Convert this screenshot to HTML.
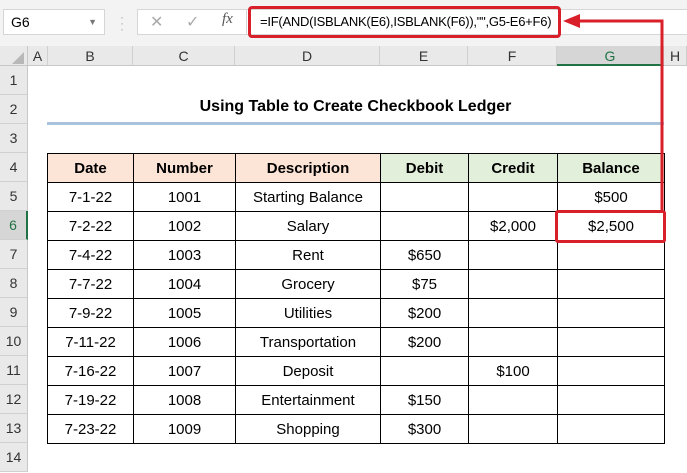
<!DOCTYPE html>
<html><head><meta charset="utf-8"><style>
*{margin:0;padding:0;box-sizing:border-box}
body{width:687px;height:473px;background:#fff;position:relative;overflow:hidden;font-family:"Liberation Sans",sans-serif;color:#000}
.a{position:absolute}
.top{left:0;top:0;width:687px;height:46px;background:#f3f3f3}
.ch{top:46px;height:20px;background:#e9e9e9;border-bottom:1px solid #c8c8c8;border-right:1px solid #d0d0d0;text-align:center;font-size:14px;line-height:20px;color:#333}
.rh{left:0;width:28px;height:29px;background:#e9e9e9;border-bottom:1px solid #d0d0d0;border-right:1px solid #c8c8c8;text-align:center;font-size:14px;line-height:29px;color:#333}
table{position:absolute;left:47px;top:153px;border-collapse:collapse}
td{border:1px solid #000;height:29px;text-align:center;font-size:15px;padding:0}
.h td{font-weight:bold}
</style></head><body>
<div class="a top"></div>
<div class="a" style="left:3px;top:9px;width:102px;height:26px;background:#fff;border:1px solid #d6d6d6;font-size:14px;line-height:24px;padding-left:7px">G6<span style="position:absolute;right:7px;top:0;font-size:9px;color:#777">▼</span></div>
<div class="a" style="left:120px;top:14px;color:#aaa;font-size:12px;line-height:6px">·<br>·<br>·</div>
<div class="a" style="left:137px;top:9px;width:110px;height:26px;background:#fff;border:1px solid #d6d6d6"></div>
<div class="a" style="left:150px;top:12px;color:#aaa;font-size:16px">✕</div>
<div class="a" style="left:186px;top:12px;color:#aaa;font-size:16px">✓</div>
<div class="a" style="left:222px;top:11px;color:#555;font-size:15px;font-style:italic;font-family:'Liberation Serif',serif">fx</div>
<div class="a" style="left:247px;top:9px;width:440px;height:26px;background:#fff;border-top:1px solid #d6d6d6;border-bottom:1px solid #d6d6d6"></div>
<div class="a" style="left:248px;top:6px;width:313px;height:32px;border:3px solid #d9202a;border-radius:4px;font-size:13px;letter-spacing:-0.25px;line-height:26px;padding-left:9px;white-space:nowrap">=IF(AND(ISBLANK(E6),ISBLANK(F6)),"",G5-E6+F6)</div>
<div class="a" style="left:0;top:46px;width:28px;height:20px;background:#e9e9e9;border-right:1px solid #c8c8c8;border-bottom:1px solid #c8c8c8"></div>
<div class="a" style="left:12px;top:52px;width:0;height:0;border-left:12px solid transparent;border-bottom:12px solid #b8b8b8"></div>
<div class="a ch" style="left:28px;width:20px">A</div>
<div class="a ch" style="left:48px;width:85px">B</div>
<div class="a ch" style="left:133px;width:102px">C</div>
<div class="a ch" style="left:235px;width:145px">D</div>
<div class="a ch" style="left:380px;width:88px">E</div>
<div class="a ch" style="left:468px;width:89px">F</div>
<div class="a ch" style="left:557px;width:107px;background:#d6d6d6;border-bottom:2px solid #217346;color:#217346">G</div>
<div class="a ch" style="left:664px;width:23px">H</div>
<div class="a rh" style="top:66px">1</div><div class="a rh" style="top:95px">2</div><div class="a rh" style="top:124px">3</div><div class="a rh" style="top:153px">4</div><div class="a rh" style="top:182px">5</div><div class="a rh" style="top:211px;background:#d6d6d6;border-right:2px solid #217346;color:#217346">6</div><div class="a rh" style="top:240px">7</div><div class="a rh" style="top:269px">8</div><div class="a rh" style="top:298px">9</div><div class="a rh" style="top:327px">10</div><div class="a rh" style="top:356px">11</div><div class="a rh" style="top:385px">12</div><div class="a rh" style="top:414px">13</div><div class="a rh" style="top:443px">14</div>
<div class="a" style="left:47px;top:98px;width:617px;text-align:center;font-weight:bold;font-size:16px">Using Table to Create Checkbook Ledger</div>
<div class="a" style="left:47px;top:122px;width:617px;height:3px;background:#aac3dd"></div>
<table>
<colgroup><col style="width:86px"><col style="width:102px"><col style="width:145px"><col style="width:88px"><col style="width:89px"><col style="width:107px"></colgroup>
<tr class="h"><td style="background:#fce4d6">Date</td><td style="background:#fce4d6">Number</td><td style="background:#fce4d6">Description</td><td style="background:#e2efda">Debit</td><td style="background:#e2efda">Credit</td><td style="background:#e2efda">Balance</td></tr>
<tr><td>7-1-22</td><td>1001</td><td>Starting Balance</td><td></td><td></td><td>$500</td></tr>
<tr><td>7-2-22</td><td>1002</td><td>Salary</td><td></td><td>$2,000</td><td>$2,500</td></tr>
<tr><td>7-4-22</td><td>1003</td><td>Rent</td><td>$650</td><td></td><td></td></tr>
<tr><td>7-7-22</td><td>1004</td><td>Grocery</td><td>$75</td><td></td><td></td></tr>
<tr><td>7-9-22</td><td>1005</td><td>Utilities</td><td>$200</td><td></td><td></td></tr>
<tr><td>7-11-22</td><td>1006</td><td>Transportation</td><td>$200</td><td></td><td></td></tr>
<tr><td>7-16-22</td><td>1007</td><td>Deposit</td><td></td><td>$100</td><td></td></tr>
<tr><td>7-19-22</td><td>1008</td><td>Entertainment</td><td>$150</td><td></td><td></td></tr>
<tr><td>7-23-22</td><td>1009</td><td>Shopping</td><td>$300</td><td></td><td></td></tr>
</table>
<div class="a" style="left:555px;top:210px;width:111px;height:33px;border:3px solid #d9202a;border-radius:3px"></div>
<svg class="a" style="left:0;top:0" width="687" height="473"><path d="M662 210 V21 H576" fill="none" stroke="#d9202a" stroke-width="3"/><path d="M563 21 L580 14 L580 28 Z" fill="#d9202a"/></svg>
</body></html>
